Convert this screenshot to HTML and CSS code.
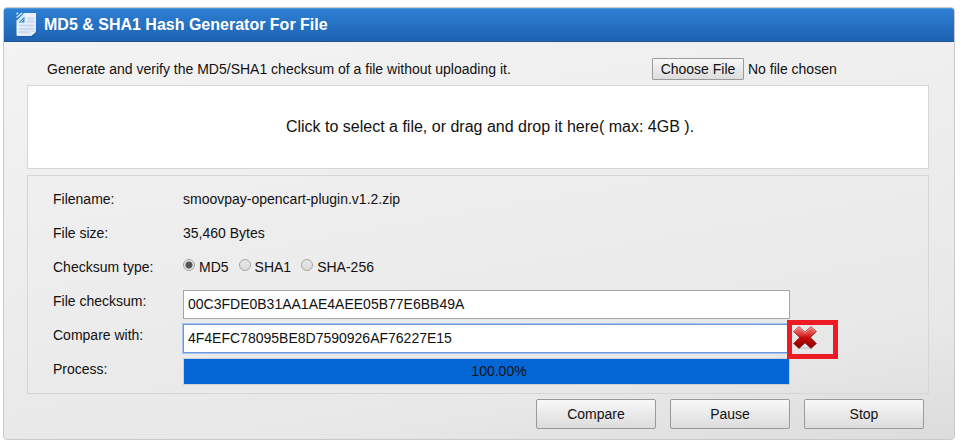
FILE: index.html
```html
<!DOCTYPE html>
<html lang="en">
<head>
    <meta charset="UTF-8">
    <title>MD5 &amp; SHA1 Hash Generator For File</title>
    <link rel="stylesheet" href="styles.css">
</head>
<body>
    <main class="panel">
        <header class="panel-header">
            <svg class="file-icon" width="24" height="26" viewBox="0 0 24 26" aria-hidden="true">
                <defs>
                    <linearGradient id="paper" x1="0" y1="0" x2="1" y2="1">
                        <stop offset="0" stop-color="#f6f9fe"/>
                        <stop offset="1" stop-color="#d9e3f3"/>
                    </linearGradient>
                </defs>
                <path d="M3 24.500H18L22 21" fill="none" stroke="#174f97" stroke-opacity=".5"/>
                <path d="M9 1H21V19.500L16 24H3Q1.500 24 1.500 22.500V10Z" fill="url(#paper)"/>
                <path d="M16 24V20.500Q16 19.500 17 19.500H21Z" fill="#fff" stroke="#bccce3" stroke-width=".6"/>
                <path d="M12 6.500h6.500M12 9.500h6.500M4 13.500h14.500M4 17h14.500M4 20h10" stroke="#cbd8ec" stroke-width="1.800"/>
                <path d="M1.500 2L3 1M1.500 5.500L7 1M1.500 9.500L10 1.500" stroke="#c9e6ff" stroke-width="1.600"/>
                <path d="M3.500 10.500L9.500 4.500V10.500Z" fill="#2b83d6"/>
                <path d="M6 10L8.500 7.500" stroke="#d7ecff"/>
            </svg>
            <h1>MD5 &amp; SHA1 Hash Generator For File</h1>
        </header>
        <form class="panel-body">
            <div class="intro">
                <label for="file">Generate and verify the MD5/SHA1 checksum of a file without uploading it.</label>
                <input type="file" id="file" class="file-input">
            </div>
            <label class="dropzone" for="file">Click to select a file, or drag and drop it here( max: 4GB ).</label>

            <div class="details">
                <span>Filename:</span>
                <span class="value">smoovpay-opencart-plugin.v1.2.zip</span>

                <span>File size:</span>
                <span class="value">35,460 Bytes</span>

                <span id="typeLabel">Checksum type:</span>
                <div class="value types" role="radiogroup" aria-labelledby="typeLabel">
                    <label><input type="radio" name="type" checked>MD5</label>
                    <label><input type="radio" name="type">SHA1</label>
                    <label><input type="radio" name="type">SHA-256</label>
                </div>

                <label for="checksum">File checksum:</label>
                <input type="text" id="checksum" class="field" value="00C3FDE0B31AA1AE4AEE05B77E6BB49A" spellcheck="false">

                <label for="compare">Compare with:</label>
                <input type="text" id="compare" class="field active" value="4F4EFC78095BE8D7590926AF76227E15" spellcheck="false">
                <div class="result">
                    <svg width="24" height="26" viewBox="0 0 24 26" role="img" aria-label="No match">
                        <defs>
                            <linearGradient id="cross" x1="0" y1="0" x2="0" y2="1">
                                <stop offset="0" stop-color="#ee8583"/>
                                <stop offset=".35" stop-color="#dc3a38"/>
                                <stop offset=".5" stop-color="#c90c0c"/>
                                <stop offset="1" stop-color="#7d0000"/>
                            </linearGradient>
                        </defs>
                        <ellipse cx="12" cy="23" rx="8" ry="1" fill="#cfcfcf"/>
                        <path d="M6 1.500L12 7L18 1.500L23.500 6.500L17.500 12.500L23.500 18.500L18 23.500L12 18L6 23.500L.5 18.500L6.500 12.500L.5 6.500Z" fill="url(#cross)" stroke="#a31212" stroke-width=".6" stroke-linejoin="round"/>
                        <path d="M2 6.500L6 2.500L12 8L18 2.500L22 6.500" fill="none" stroke="#f0a09e" stroke-width=".8"/>
                    </svg>
                </div>

                <span id="processLabel">Process:</span>
                <div class="progress" role="progressbar" aria-labelledby="processLabel" aria-valuenow="100">100.00%</div>
            </div>

            <div class="actions">
                <button type="button" class="btn">Compare</button>
                <button type="button" class="btn">Pause</button>
                <button type="button" class="btn">Stop</button>
            </div>
        </form>
    </main>
</body>
</html>
```
FILE: styles.css
```css
*,
*::after {
    box-sizing: border-box;
}

body {
    margin: 7px 9px 6px 3px;
    background: #fff;
    color: #111;
    font: 14px/20px "Liberation Sans", Arial, sans-serif;
}

input,
button {
    font: inherit;
    color: inherit;
}

.panel {
    border: 1px solid #c9c9c9;
    border-radius: 4px;
    background: linear-gradient(170deg, #f4f4f4, #e8e8e8 80%, #dcdcdc);
    overflow: hidden;
}

.panel-header {
    display: flex;
    align-items: center;
    gap: 5px;
    height: 34px;
    padding-left: 11px;
    background: linear-gradient(#2d7fd2, #1f62b2);
    border-top: 1px solid #4b96dc;
    border-bottom: 1px solid #1c5499;
    color: #fff;
}

.panel-header h1 {
    margin: 0;
    font-size: 16px;
}

.panel-body {
    padding: 16px 25px 10px 23px;
}

.intro {
    display: flex;
    align-items: center;
    justify-content: space-between;
    height: 22px;
    margin-bottom: 5px;
    padding-left: 20px;
}

.file-input {
    width: 277px;
}

.file-input::file-selector-button {
    width: 92px;
    height: 22px;
    margin: 0 4px 0 0;
    padding: 0;
    border: 1px solid #9b9b9b;
    border-radius: 1px;
    background: linear-gradient(#f8f8f8, #dcdcdc);
    font: inherit;
    color: inherit;
}

.dropzone {
    display: flex;
    align-items: center;
    justify-content: center;
    height: 84px;
    margin-bottom: 6px;
    padding-left: 24px;
    border: 1px solid #d6d6d6;
    background: #fff;
    font-size: 16px;
    cursor: pointer;
}

.details {
    display: grid;
    grid-template-columns: 130px 1fr 138px;
    grid-auto-rows: 34px;
    padding: 6px 0 7px 25px;
    border: 1px solid #d6d6d6;
    line-height: 34px;
}

.details > span,
.details > label {
    grid-column: 1;
}

.details > .value {
    grid-column: 2;
}

.types {
    display: flex;
    gap: 10px;
}

.types label {
    display: flex;
    gap: 4px;
}

.types input {
    appearance: none;
    width: 12px;
    height: 12px;
    margin: 9px 0 0;
    border: 1px solid #a5a5a5;
    border-radius: 50%;
    background: linear-gradient(#e6e6e6, #dcdcdc);
}

.types input:checked {
    background: radial-gradient(circle, #555 3px, #e4e4e4 4px);
}

.field {
    width: 100%;
    height: 29px;
    margin: 6px 0 0;
    padding: 0 4px 2px;
    border: 1px solid #a5a5a5;
    background: #fff;
}

.field.active {
    border-color: #6e98dc;
    outline: 1px solid #a7c3f0;
}

.result {
    position: relative;
    padding: 7px 0 0 3px;
}

.result svg {
    display: block;
}

/* highlight around the verdict */
.result::after {
    content: "";
    position: absolute;
    top: 2px;
    left: -3px;
    width: 51px;
    height: 39px;
    border: 5px solid #ed1c24;
}

.progress {
    height: 27px;
    margin-top: 6px;
    padding-left: 25px;
    border: 1px solid #d0d0d0;
    background: #0566d6;
    line-height: 24px;
    text-align: center;
}

.actions {
    display: flex;
    justify-content: flex-end;
    gap: 14px;
    padding: 5px 5px 0 0;
}

.btn {
    width: 120px;
    height: 30px;
    padding: 0;
    border: 1px solid #999;
    border-radius: 2px;
    background: linear-gradient(#f8f8f8, #dcdcdc);
}
```
